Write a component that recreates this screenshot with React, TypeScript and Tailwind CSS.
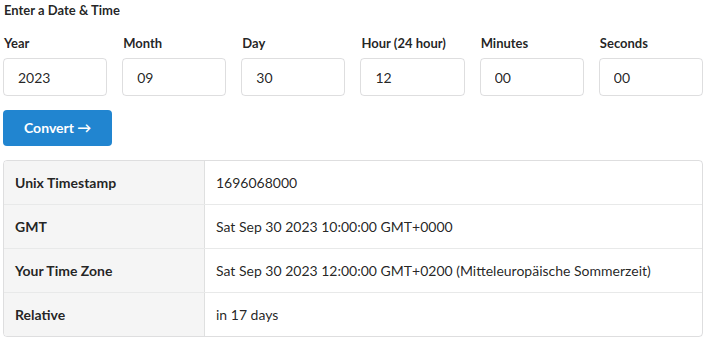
import React from "react";

const fields = [
  { label: "Year", value: "2023" },
  { label: "Month", value: "09" },
  { label: "Day", value: "30" },
  { label: "Hour (24 hour)", value: "12" },
  { label: "Minutes", value: "00" },
  { label: "Seconds", value: "00" },
];

const rows = [
  { k: "Unix Timestamp", v: "1696068000" },
  { k: "GMT", v: "Sat Sep 30 2023 10:00:00 GMT+0000" },
  { k: "Your Time Zone", v: "Sat Sep 30 2023 12:00:00 GMT+0200 (Mitteleuropäische Sommerzeit)" },
  { k: "Relative", v: "in 17 days" },
];

export default function App() {
  return (
    <div
      className="bg-white text-[14px] leading-[20px] text-[rgba(0,0,0,0.87)] pl-[3px] pr-[4px] pt-[1px] w-[707px] h-[341px]"
      style={{ fontFamily: "Lato, 'Open Sans', sans-serif" }}
    >
      <div className="font-bold text-[13px] leading-[18px] pl-[1px]">Enter a Date &amp; Time</div>
      <div className="grid grid-cols-6 gap-x-[15px] mt-[15px]">
        {fields.map((f) => (
          <div key={f.label} className="flex flex-col">
            <label className="font-bold text-[13px] leading-[18px] pl-[1px] mb-[6px]">{f.label}</label>
            <input
              readOnly
              value={f.value}
              className="h-[38px] w-full border border-[rgba(34,36,38,0.15)] rounded-[4px] px-[14px] text-[14px] text-[rgba(0,0,0,0.87)] outline-none"
              style={{ fontFamily: "Lato, sans-serif" }}
            />
          </div>
        ))}
      </div>
      <div className="mt-[14px]">
        <button className="h-[36px] px-[21px] rounded-[4px] bg-[#2185d0] text-white font-bold text-[14px]">
          Convert →
        </button>
      </div>
      <div className="mt-[14px] border border-[rgba(34,36,38,0.15)] rounded-[4px] overflow-hidden">
        {rows.map((r, i) => (
          <div
            key={r.k}
            className={`flex ${i > 0 ? "h-[44px] border-t border-[rgba(34,36,38,0.1)]" : "h-[43px]"}`}
          >
            <div className="w-[201px] shrink-0 bg-[#f5f5f5] border-r border-[rgba(34,36,38,0.1)] font-bold flex items-center px-[11px]">
              {r.k}
            </div>
            <div className="flex-1 flex items-center px-[11px]">{r.v}</div>
          </div>
        ))}
      </div>
    </div>
  );
}
